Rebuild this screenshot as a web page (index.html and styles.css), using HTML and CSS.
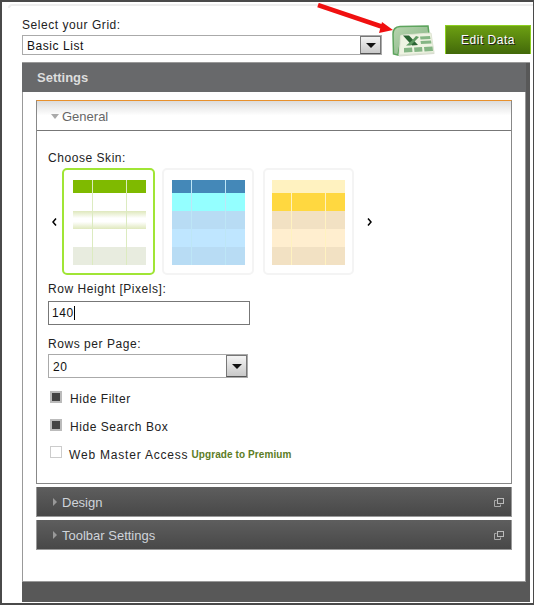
FILE: index.html
```html
<!DOCTYPE html>
<html lang="en">
<head>
    <meta charset="UTF-8">
    <title>Select your Grid</title>
    <link rel="stylesheet" href="styles.css">
</head>
<body>
    <div class="window">
        <div class="window-top"></div>

        <div class="top-row">
            <div class="grid-picker">
                <label class="field-label">Select your Grid:</label>
                <div class="select-box grid-select">
                    <span class="select-text">Basic List</span>
                    <span class="select-arrow"></span>
                </div>
            </div>
            <svg class="excel-icon" width="44" height="34" viewBox="0 0 44 34">
                <defs>
                    <linearGradient id="frame" x1="0" y1="0" x2="1" y2="1">
                        <stop offset="0" stop-color="#b9d6b0"/>
                        <stop offset="1" stop-color="#7fb07f"/>
                    </linearGradient>
                </defs>
                <path d="M1.500 29 L1 9 Q1 2 8 1.500 L36 1 L37 9 L10 10 L6 30 Z" fill="url(#frame)" stroke="#5da45d" stroke-width="1.500"/>
                <path d="M8 11 L39 8.500 L42.500 29 L7 31.500 Z" fill="#d8ddd0"/>
                <path d="M9 10 L39 8 L42 27.500 L7 30 Z" fill="#eef3e2" stroke="#dfe5d4"/>
                <path d="M11 10.500 L17 10.500 L26 20 L20 20.500 Z" fill="#2a6433"/>
                <path d="M24 11 L20 15.500 L14 20.500 L18.500 20.500 L27 12 Z" fill="#5f9a62"/>
                <path d="M28 11.500 L38 11 L38.500 14 L28.500 14.500 Z M28.500 16 L39 15.500 L39.500 18.500 L29 19 Z M12 23 L20 22.500 L20.500 27 L12 27.500 Z M22 22.500 L30 22 L30.500 26.500 L22.500 27 Z M32 22 L40.500 21.500 L41 26 L32.500 26.500 Z" fill="#84b584"/>
            </svg>
            <button class="edit-btn">Edit Data</button>
        </div>

        <div class="panel">
            <div class="panel-title">Settings</div>
            <div class="panel-body">
                <div class="section">
                    <div class="section-head">
                        <span class="tri-down"></span>General
                    </div>
                    <div class="section-body">
                        <div class="field-label skin-label">Choose Skin:</div>
                        <div class="skins">
                            <svg class="skin-nav" width="14" height="8" viewBox="0 0 14 8">
                                <path d="M8 0.500 L5 4 L8 7.500" fill="none" stroke="#000" stroke-width="1.500"/>
                            </svg>
                            <div class="skin skin-active">
                                <svg width="73" height="85" viewBox="0 0 73 85">
                                    <defs>
                                        <linearGradient id="band" x1="0" y1="0" x2="0" y2="1">
                                            <stop offset="0" stop-color="#dfe8bd"/>
                                            <stop offset="0.4" stop-color="#ffffff"/>
                                            <stop offset="0.6" stop-color="#ffffff"/>
                                            <stop offset="1" stop-color="#dfe8bd"/>
                                        </linearGradient>
                                    </defs>
                                    <rect y="0" width="73" height="13" fill="#7fba00"/>
                                    <rect y="31" width="73" height="18" fill="url(#band)"/>
                                    <rect y="67" width="73" height="18" fill="#e8ecdf"/>
                                    <rect x="19" width="1" height="85" fill="#dcebc0"/>
                                    <rect x="53" width="1" height="85" fill="#dcebc0"/>
                                </svg>
                            </div>
                            <div class="skin skin-blue">
                                <svg width="73" height="85" viewBox="0 0 73 85">
                                    <rect y="0" width="73" height="13" fill="#4488b8"/>
                                    <rect y="13" width="73" height="18" fill="#94ffff"/>
                                    <rect y="31" width="73" height="18" fill="#b8dcf4"/>
                                    <rect y="49" width="73" height="18" fill="#bfe6ff"/>
                                    <rect y="67" width="73" height="18" fill="#b8dcf4"/>
                                    <rect x="19" width="1" height="85" fill="#bde6f6"/>
                                    <rect x="53" width="1" height="85" fill="#bde6f6"/>
                                </svg>
                            </div>
                            <div class="skin skin-yellow">
                                <svg width="73" height="85" viewBox="0 0 73 85">
                                    <rect y="0" width="73" height="13" fill="#fff2c0"/>
                                    <rect y="13" width="73" height="18" fill="#ffd840"/>
                                    <rect y="31" width="73" height="18" fill="#f2e1c3"/>
                                    <rect y="49" width="73" height="18" fill="#ffeecf"/>
                                    <rect y="67" width="73" height="18" fill="#f2e1c3"/>
                                    <rect x="19" y="13" width="1" height="72" fill="#fff2c0"/>
                                    <rect x="53" y="13" width="1" height="72" fill="#fff2c0"/>
                                </svg>
                            </div>
                            <svg class="skin-nav" width="14" height="8" viewBox="0 0 14 8">
                                <path d="M5 0.500 L8 4 L5 7.500" fill="none" stroke="#000" stroke-width="1.500"/>
                            </svg>
                        </div>

                        <div class="field-label row-height-label">Row Height [Pixels]:</div>
                        <div class="text-box">140<span class="caret"></span></div>

                        <div class="field-label rows-label">Rows per Page:</div>
                        <div class="select-box rows-select">
                            <span class="select-text">20</span>
                            <span class="select-arrow"></span>
                        </div>

                        <div class="check-row"><span class="check"></span>Hide Filter</div>
                        <div class="check-row"><span class="check"></span>Hide Search Box</div>
                        <div class="check-row check-off">
                            <span class="check"></span><span class="check-text">Web Master Access</span>
                            <a class="upgrade">Upgrade to Premium</a>
                        </div>
                    </div>
                </div>

                <div class="bar">
                    <span class="tri-right"></span>Design
                    <svg class="popout" width="10" height="9" viewBox="0 0 10 9">
                        <path d="M2.500 2.500 H0.500 V8.500 H6.500 V6.500" fill="none" stroke="#aaa"/>
                        <rect x="3.500" y="0.500" width="6" height="5" fill="none" stroke="#bbb"/>
                    </svg>
                </div>
                <div class="bar">
                    <span class="tri-right"></span>Toolbar Settings
                    <svg class="popout" width="10" height="9" viewBox="0 0 10 9">
                        <path d="M2.500 2.500 H0.500 V8.500 H6.500 V6.500" fill="none" stroke="#aaa"/>
                        <rect x="3.500" y="0.500" width="6" height="5" fill="none" stroke="#bbb"/>
                    </svg>
                </div>
            </div>
        </div>

        <svg class="red-arrow" width="80" height="36" viewBox="0 0 80 36">
            <path d="M1 2 L66 24" stroke="#f01010" stroke-width="4.500" fill="none"/>
            <path d="M76 27 L65 19 L62 30 Z" fill="#f01010"/>
        </svg>
    </div>
</body>
</html>
```

FILE: styles.css
```css
* {
    box-sizing: border-box;
}

body {
    margin: 0;
    background-color: #fff;
    font-family: "Liberation Sans", Arial, sans-serif;
    font-size: 12px;
    color: #333;
}

.window {
    position: relative;
    width: 534px;
    height: 605px;
    border: 2px solid #4a4a4a;
    border-right-width: 1px;
    padding-left: 20px;
    box-shadow: inset -2px -2px 0 #fff;
}

.window-top {
    height: 4px;
    margin: 2px 0 0 -14px;
    border-top: 2px solid #eee;
    border-left: 2px solid #eee;
    border-top-left-radius: 6px;
}

.field-label {
    font-size: 12px;
    letter-spacing: 0.55px;
    color: #222;
    line-height: 14px;
}

/* top row */
.top-row {
    display: flex;
    height: 54px;
}

.grid-picker {
    width: 360px;
    padding-top: 10px;
}

.grid-picker .field-label {
    display: block;
    margin-bottom: 3px;
}

.select-box {
    display: flex;
    justify-content: space-between;
    align-items: center;
    background-color: #fff;
    border: 1px solid #aaa;
    padding-left: 4px;
    font-size: 12px;
    letter-spacing: 0.55px;
    color: #111;
}

.select-text {
    padding-top: 2px;
}

.grid-select {
    height: 20px;
}

.select-arrow {
    position: relative;
    width: 21px;
    height: 100%;
    border: 1px solid #777;
    border-bottom-color: #555;
    background: linear-gradient(#f4f4f4, #c8c8c8);
}

.select-arrow::after {
    content: "";
    position: absolute;
    left: 5px;
    top: 6px;
    border-top: 5px solid #111;
    border-left: 5px solid transparent;
    border-right: 5px solid transparent;
}

.excel-icon {
    margin: 17px 0 0 10px;
}

.edit-btn {
    width: 86px;
    height: 29px;
    margin: 17px 0 0 9px;
    padding: 0;
    border: 1px solid #8ccf1e;
    border-bottom: none;
    background: linear-gradient(#6c9f12, #42690a);
    color: #fff;
    font-family: "Liberation Sans", Arial, sans-serif;
    font-size: 12px;
    letter-spacing: 0.5px;
    text-shadow: 1px 1px 0 #222;
}

/* settings panel */
.panel {
    width: 508px;
    height: 540px;
    padding-bottom: 20px;
    background-color: #585858;
    border-top: 1px solid #999;
}

.panel-title {
    width: 504px;
    height: 29px;
    padding: 7px 0 0 15px;
    background-color: #68696b;
    color: #ddd;
    font-size: 13px;
    font-weight: bold;
}

.panel-body {
    width: 504px;
    height: 490px;
    padding: 8px 0 0 13px;
    background-color: #fff;
    border: 1px solid #999;
    border-top: none;
}

.section {
    width: 476px;
    height: 384px;
    border: 1px solid #888;
    border-top: 1px solid #e8902c;
}

.section-head {
    display: flex;
    align-items: center;
    height: 30px;
    padding: 2px 0 0 14px;
    border-bottom: 1px solid #777;
    background: linear-gradient(#dcdcdc, #fff 50%);
    font-size: 13px;
    color: #666;
}

.tri-down {
    margin-right: 3px;
    border-top: 5px solid #aaa;
    border-left: 4px solid transparent;
    border-right: 4px solid transparent;
}

.section-body {
    padding: 20px 0 0 11px;
}

.skins {
    display: flex;
    align-items: center;
    margin-top: 3px;
}

.skin-nav {
    flex: none;
}

.skin {
    width: 91px;
    height: 107px;
    margin-right: 9px;
    padding: 10px 0 0 7px;
    border: 2px solid #f4f4f4;
    border-radius: 5px;
}

.skin svg {
    display: block;
}

.skin-active {
    width: 93px;
    margin-right: 7px;
    padding-left: 9px;
    border-color: #a0e535;
}

.skin-blue {
    width: 92px;
    padding-left: 8px;
}

.skin-yellow {
    margin-right: 9px;
}

.row-height-label {
    margin-top: 7px;
}

.text-box {
    display: flex;
    align-items: center;
    width: 202px;
    height: 24px;
    margin-top: 5px;
    padding-left: 3px;
    border: 1px solid #777;
    font-size: 12px;
    letter-spacing: 0.55px;
    color: #111;
}

.caret {
    width: 1px;
    height: 14px;
    background-color: #000;
}

.rows-label {
    margin-top: 12px;
}

.rows-select {
    width: 200px;
    height: 24px;
    margin-top: 3px;
    margin-bottom: 13px;
}

.rows-select .select-arrow::after {
    top: 8px;
}

.check-row {
    display: flex;
    align-items: center;
    height: 16px;
    margin-top: 12px;
    padding-left: 2px;
    font-size: 12px;
    letter-spacing: 0.55px;
    color: #222;
}

.check {
    width: 12px;
    height: 12px;
    margin: 0 8px 5px 0;
    border: 2px solid #bbb;
    background-color: #444;
}

.check-off .check {
    margin: 0 7px 6px 0;
    border: 1px solid #ccc;
    background-color: #fff;
}

.check-text {
    letter-spacing: 0.8px;
}

.upgrade {
    margin: 0 0 2px 3px;
    font-size: 10px;
    font-weight: bold;
    letter-spacing: 0.1px;
    color: #5c7c25;
}

.bar {
    position: relative;
    display: flex;
    align-items: center;
    width: 476px;
    height: 30px;
    margin-top: 3px;
    padding: 1px 0 0 16px;
    border: 1px solid #999;
    border-top: none;
    background: linear-gradient(#5e5e5e, #484848);
    color: #cfd4da;
    font-size: 13px;
}

.tri-right {
    margin-right: 5px;
    border-left: 4px solid #999;
    border-top: 4px solid transparent;
    border-bottom: 4px solid transparent;
}

.popout {
    position: absolute;
    right: 7px;
    top: 11px;
}

.red-arrow {
    position: absolute;
    left: 315px;
    top: 1px;
}
```
